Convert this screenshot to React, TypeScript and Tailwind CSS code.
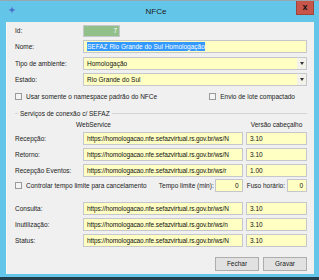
import type { ReactNode } from 'react';

const font = { fontFamily: '"Liberation Sans", Arial, sans-serif' };

function Field({ children, className = '' }: { children?: ReactNode; className?: string }) {
  return (
    <div
      className={`h-[13px] bg-[#ffffc4] border border-[#c4c7cc] flex items-center px-[3px] text-[#111] overflow-hidden whitespace-nowrap ${className}`}
    >
      {children}
    </div>
  );
}

function Select({ value }: { value: string }) {
  return (
    <div className="flex-1 h-[13px] bg-[#ffffc4] border border-[#c4c7cc] flex items-center text-[#111]">
      <span className="flex-1 px-[3px] whitespace-nowrap">{value}</span>
      <div className="w-[9px] h-full flex items-center justify-center bg-[#f2f2ea]">
        <div className="w-0 h-0 border-l-[2.5px] border-r-[2.5px] border-t-[3px] border-l-transparent border-r-transparent border-t-[#333]" />
      </div>
    </div>
  );
}

function Check({ label }: { label: string }) {
  return (
    <div className="flex items-center gap-[4px] whitespace-nowrap">
      <div className="w-[7px] h-[7px] shrink-0 border border-[#9a9a9a] bg-[#f4f4f4]" />
      <span>{label}</span>
    </div>
  );
}

function Label({ children }: { children: ReactNode }) {
  return <div className="w-[68px] shrink-0 whitespace-nowrap">{children}</div>;
}

const services1 = [
  { label: 'Recepção:', url: 'https://homologacao.nfe.sefazvirtual.rs.gov.br/ws/N', ver: '3.10' },
  { label: 'Retorno:', url: 'https://homologacao.nfe.sefazvirtual.rs.gov.br/ws/N', ver: '3.10' },
  { label: 'Recepção Eventos:', url: 'https://homologacao.nfe.sefazvirtual.rs.gov.br/ws/r', ver: '1.00' },
];

const services2 = [
  { label: 'Consulta:', url: 'https://homologacao.nfe.sefazvirtual.rs.gov.br/ws/N', ver: '3.10' },
  { label: 'Inutilização:', url: 'https://homologacao.nfe.sefazvirtual.rs.gov.br/ws/n', ver: '3.10' },
  { label: 'Status:', url: 'https://homologacao.nfe.sefazvirtual.rs.gov.br/ws/N', ver: '3.10' },
];

function ServiceRow({ label, url, ver }: { label: string; url: string; ver: string }) {
  return (
    <div className="flex items-center">
      <Label>{label}</Label>
      <Field className="w-[160px] tracking-[-0.1px] px-[2px]">{url}</Field>
      <Field className="flex-1 ml-[3px]">{ver}</Field>
    </div>
  );
}

export default function App() {
  return (
    <div className="w-[319px] h-[280px] bg-[#63c6e8] flex flex-col text-[6.5px] text-[#1a1a1a] overflow-hidden" style={font}>
      <div className="h-[1px] bg-[#9aa6ad]" />
      {/* Title bar */}
      <div className="h-[21px] flex items-start">
        <div className="pl-[8px] pt-[5px]">
          <svg width="8" height="8" viewBox="0 0 8 8">
            <path d="M4 0.5 L4.8 3 L7.5 4 L4.8 5 L4 7.5 L3.2 5 L0.5 4 L3.2 3 Z" fill="#6a5fc0" />
            <circle cx="4" cy="4" r="1.4" fill="#2f7fd0" />
          </svg>
        </div>
        <div className="flex-1 text-center pt-[5px] text-[8px] text-[#1a1a1a]">NFCe</div>
        <div className="w-[18px] h-[14px] bg-[#c8554a] mr-[5px] flex items-center justify-center text-[9px] font-bold text-[#111] leading-none border border-[#a0433a] border-t-0">
          x
        </div>
      </div>
      {/* Client */}
      <div className="flex-1 mr-[5px] ml-[6px] bg-[#f0f0f0] border-l border-[#f8f8f8] flex flex-col pl-[8px] pr-[7px] pt-[3px]">
        <div className="flex items-center h-[12px]">
          <Label>Id:</Label>
          <div className="w-[37px] h-[12px] bg-[#92c08b] border border-[#c4c7cc] text-white text-right pr-[2px] leading-[10px]">7</div>
        </div>
        <div className="flex items-center mt-[3px]">
          <Label>Nome:</Label>
          <Field className="flex-1">
            <span className="bg-[#3399ff] text-white">SEFAZ Rio Grande do Sul Homologação</span>
          </Field>
        </div>
        <div className="flex items-center mt-[4px]">
          <Label>Tipo de ambiente:</Label>
          <Select value="Homologação" />
        </div>
        <div className="flex items-center mt-[3px]">
          <Label>Estado:</Label>
          <Select value="Rio Grande do Sul" />
        </div>
        <div className="flex items-center justify-between mt-[6px] h-[9px]">
          <Check label="Usar somente o namespace padrão do NFCe" />
          <div className="pr-[12px]">
            <Check label="Envio de lote compactado" />
          </div>
        </div>
        {/* Group */}
        <div className="flex items-center mt-[8px] h-[9px]">
          <div className="w-[3px] h-px bg-[#d5d5d5] mr-[2px]" />
          <span className="whitespace-nowrap">Serviços de conexão c/ SEFAZ</span>
          <div className="flex-1 h-px bg-[#d5d5d5] ml-[2px]" />
        </div>
        <div className="flex items-center mt-[2px] h-[9px]">
          <div className="w-[228px] pl-[61px]">WebService</div>
          <div className="flex-1 text-center ml-[3px]">Versão cabeçalho</div>
        </div>
        <div className="flex flex-col gap-[3px] mt-[3px]">
          {services1.map((s) => (
            <ServiceRow key={s.label} {...s} />
          ))}
        </div>
        <div className="flex items-center mt-[3px] h-[11px] whitespace-nowrap">
          <div className="flex-1">
            <Check label="Controlar tempo limite para cancelamento" />
          </div>
          <span className="mr-[1px]">Tempo limite (min):</span>
          <Field className="w-[28px] h-[11px] justify-end">0</Field>
          <span className="ml-[4px] mr-[2px]">Fuso horário:</span>
          <Field className="w-[20px] h-[11px] justify-end">0</Field>
        </div>
        <div className="flex flex-col gap-[3px] mt-[11px]">
          {services2.map((s) => (
            <ServiceRow key={s.label} {...s} />
          ))}
        </div>
        <div className="flex justify-end gap-[4px] mt-[10px]">
          <button className="w-[44px] h-[14px] border border-[#adadad] bg-[#e1e1e1] text-[#1a1a1a]">Fechar</button>
          <button className="w-[44px] h-[14px] border border-[#adadad] bg-[#e1e1e1] text-[#1a1a1a]">Gravar</button>
        </div>
      </div>
      <div className="h-[3px]" />
      <div className="h-[3px] bg-[#233c4c]" />
    </div>
  );
}
